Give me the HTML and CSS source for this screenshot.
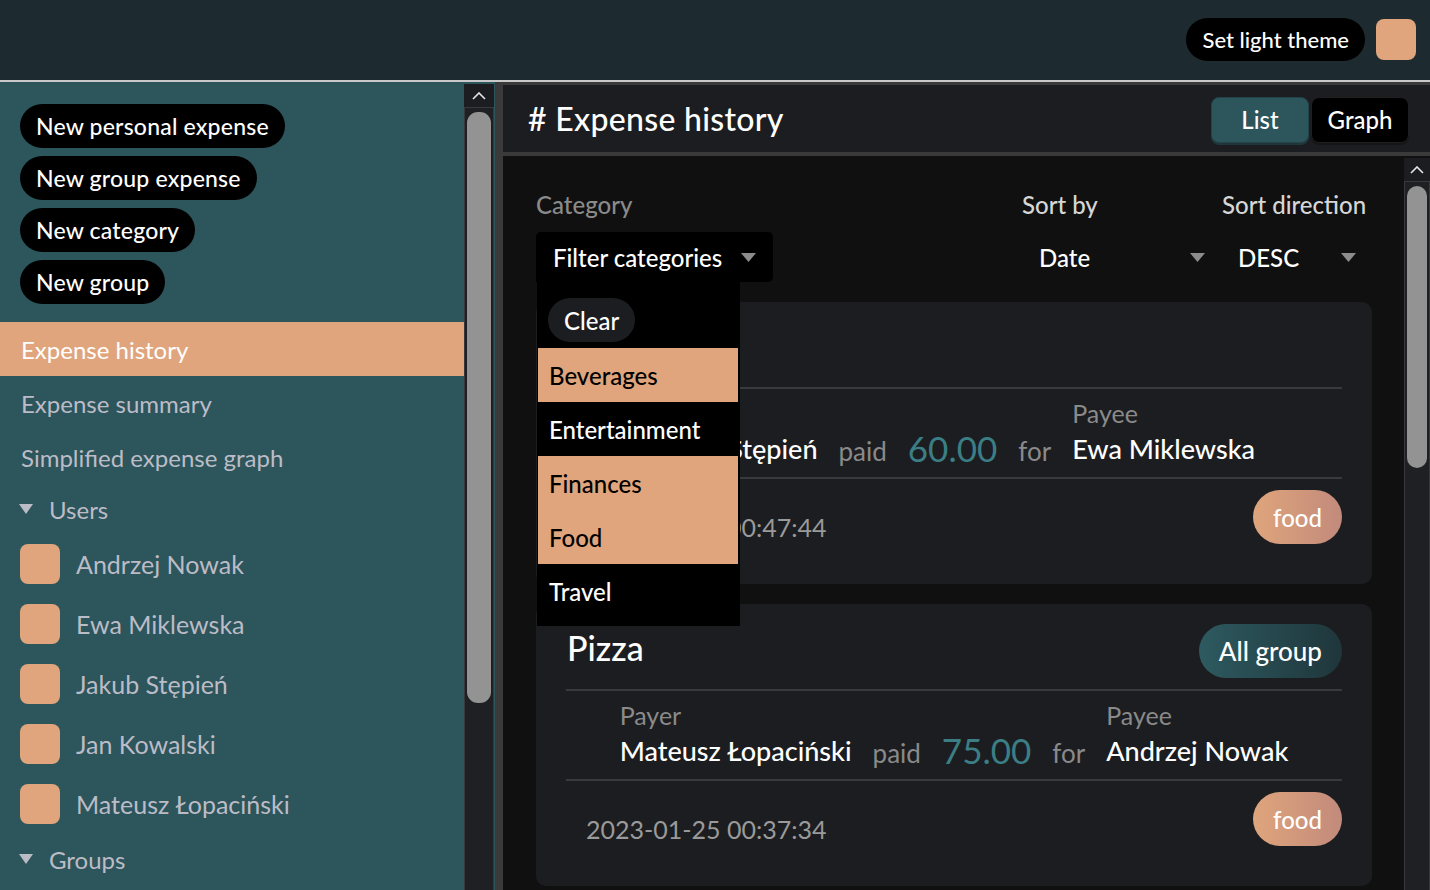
FILE: index.html
```html
<!DOCTYPE html>
<html lang="en">
<head>
<meta charset="utf-8">
<title>Expense history</title>
<link rel="stylesheet" href="styles.css">
</head>
<body>
<header class="topbar">
  <button class="theme-btn">Set light theme</button>
  <span class="swatch"></span>
</header>
<div class="app">
  <div class="side-wrap">
    <aside class="sidebar">
      <div class="actions">
        <button class="pill-btn">New personal expense</button>
        <button class="pill-btn">New group expense</button>
        <button class="pill-btn">New category</button>
        <button class="pill-btn">New group</button>
      </div>
      <nav class="nav">
        <a class="nav-item active">Expense history</a>
        <a class="nav-item">Expense summary</a>
        <a class="nav-item">Simplified expense graph</a>
        <div class="section"><svg class="tri" viewBox="0 0 14 10"><polygon points="0,0 14,0 7,10"/></svg>Users</div>
        <ul class="users">
          <li class="user"><span class="avatar"></span>Andrzej Nowak</li>
          <li class="user"><span class="avatar"></span>Ewa Miklewska</li>
          <li class="user"><span class="avatar"></span>Jakub Stępień</li>
          <li class="user"><span class="avatar"></span>Jan Kowalski</li>
          <li class="user"><span class="avatar"></span>Mateusz Łopaciński</li>
        </ul>
        <div class="section"><svg class="tri" viewBox="0 0 14 10"><polygon points="0,0 14,0 7,10"/></svg>Groups</div>
      </nav>
    </aside>
    <div class="scrollbar side-scroll">
      <div class="sb-btn"><svg viewBox="0 0 14 8"><polyline points="1,7 7,1 13,7"/></svg></div>
      <div class="sb-track"><div class="sb-thumb side-thumb"></div></div>
      <div class="sb-btn"><svg viewBox="0 0 14 8"><polyline points="1,1 7,7 13,1"/></svg></div>
    </div>
  </div>
  <main class="main">
    <div class="main-inner">
      <div class="main-head">
        <h1 class="title"># Expense history</h1>
        <div class="toggle">
          <button class="tg tg-active">List</button>
          <button class="tg">Graph</button>
        </div>
      </div>
      <div class="main-body">
        <div class="content">
          <div class="filters">
            <div class="fcol">
              <div class="flabel dim">Category</div>
              <div class="select filter-select">
                <span>Filter categories</span>
                <svg class="chev" viewBox="0 0 15 9"><polygon points="0,0 15,0 7.5,9"/></svg>
                <div class="dropdown">
                  <button class="clear-btn">Clear</button>
                  <div class="opt sel">Beverages</div>
                  <div class="opt">Entertainment</div>
                  <div class="opt sel">Finances</div>
                  <div class="opt sel">Food</div>
                  <div class="opt">Travel</div>
                </div>
              </div>
            </div>
            <div class="fcol">
              <div class="flabel">Sort by</div>
              <div class="select plain-select">
                <span>Date</span>
                <svg class="chev" viewBox="0 0 15 9"><polygon points="0,0 15,0 7.5,9"/></svg>
              </div>
            </div>
            <div class="fcol">
              <div class="flabel">Sort direction</div>
              <div class="select plain-select dir-select">
                <span>DESC</span>
                <svg class="chev" viewBox="0 0 15 9"><polygon points="0,0 15,0 7.5,9"/></svg>
              </div>
            </div>
          </div>

          <div class="cards">
            <article class="card">
              <div class="card-head">
                <h2 class="card-title">Wine</h2>
              </div>
              <div class="sep"></div>
              <div class="tx">
                <div class="party"><span class="plabel">Payer</span><span class="pname">Jakub Stępień</span></div>
                <span class="word">paid</span>
                <span class="amount">60.00</span>
                <span class="word">for</span>
                <div class="party"><span class="plabel">Payee</span><span class="pname">Ewa Miklewska</span></div>
              </div>
              <div class="sep"></div>
              <div class="card-foot">
                <span class="date">2023-01-25 00:47:44</span>
                <span class="tag food">food</span>
              </div>
            </article>

            <article class="card">
              <div class="card-head">
                <h2 class="card-title">Pizza</h2>
                <span class="tag group">All group</span>
              </div>
              <div class="sep"></div>
              <div class="tx">
                <div class="party"><span class="plabel">Payer</span><span class="pname">Mateusz Łopaciński</span></div>
                <span class="word">paid</span>
                <span class="amount">75.00</span>
                <span class="word">for</span>
                <div class="party"><span class="plabel">Payee</span><span class="pname">Andrzej Nowak</span></div>
              </div>
              <div class="sep"></div>
              <div class="card-foot">
                <span class="date">2023-01-25 00:37:34</span>
                <span class="tag food">food</span>
              </div>
            </article>
          </div>
        </div>
        <div class="scrollbar main-scroll">
          <div class="sb-btn"><svg viewBox="0 0 14 8"><polyline points="1,7 7,1 13,7"/></svg></div>
          <div class="sb-track"><div class="sb-thumb main-thumb"></div></div>
          <div class="sb-btn"><svg viewBox="0 0 14 8"><polyline points="1,1 7,7 13,1"/></svg></div>
        </div>
      </div>
    </div>
  </main>
</div>
</body>
</html>
```
FILE: styles.css
```css
* { box-sizing: border-box; }
html, body { margin: 0; padding: 0; }
body {
  width: 1430px;
  height: 890px;
  overflow: hidden;
  background: #1d2a2f;
  font-family: "Lato", "Noto Sans", sans-serif;
  color: #fff;
}
button { font-family: inherit; border: none; cursor: pointer; }

/* top bar */
.topbar {
  height: 82px;
  border-bottom: 2px solid #c9c9c9;
  display: flex;
  justify-content: flex-end;
  align-items: center;
  gap: 11px;
  padding: 0 14px 2px 0;
}
.theme-btn {
  height: 43px;
  padding: 0 16px;
  border-radius: 22px;
  background: #000;
  color: #fff;
  font-size: 22px;
  font-weight: 500;
}
.swatch {
  width: 40px;
  height: 41px;
  border-radius: 8px;
  background: #e0a57c;
}

/* app */
.app {
  display: flex;
  height: 808px;
}
.side-wrap {
  width: 495px;
  flex: none;
  display: flex;
  background: #2d555c;
  padding-top: 2px;
  overflow: hidden;
}
.sidebar {
  width: 464px;
  flex: none;
  padding-top: 20px;
}
.actions {
  display: flex;
  flex-direction: column;
  align-items: flex-start;
  gap: 8px;
  padding-left: 20px;
}
.pill-btn {
  height: 44px;
  padding: 0 16px;
  border-radius: 22px;
  background: #000;
  color: #fff;
  font-size: 23px;
  letter-spacing: 0.2px;
  font-weight: 500;
}
.nav { margin-top: 18px; display: flex; flex-direction: column; }
.nav-item {
  height: 54px;
  display: flex;
  align-items: center;
  padding-left: 21px;
  font-size: 24px;
  color: #bcbcc6;
}
.nav-item.active { background: #e0a57c; color: #fff; }
.nav-item.wide { letter-spacing: 0.3px; }
.section {
  height: 50px;
  display: flex;
  align-items: center;
  padding-left: 19px;
  gap: 16px;
  font-size: 24px;
  color: #bcbcc6;
}
.tri { width: 14px; height: 10px; fill: #bcbcc6; }
.users { list-style: none; margin: 0; padding: 0; }
.user {
  height: 60px;
  display: flex;
  align-items: center;
  gap: 16px;
  padding-left: 20px;
  font-size: 25px;
  color: #bcbcc6;
}
.avatar {
  width: 40px;
  height: 40px;
  border-radius: 8px;
  background: #e0a57c;
  flex: none;
}

/* scrollbars */
.scrollbar {
  display: flex;
  flex-direction: column;
  background: #1c1d20;
  flex: none;
}
.side-scroll { width: 30px; margin-right: 1px; height: 830px; }
.main-scroll { width: 26px; height: 760px; margin-top: 2px; }
.sb-btn {
  height: 23px;
  flex: none;
  display: flex;
  align-items: center;
  justify-content: center;
}
.sb-btn svg { width: 14px; height: 8px; fill: none; stroke: #e6e6e6; stroke-width: 1.6; }
.sb-track {
  flex: 1;
  border: 1px solid #38393b;
  background: #1f2023;
  padding: 4px 2px;
}
.sb-thumb { background: #939393; border-radius: 11px; }
.side-thumb { height: 591px; }
.main-thumb { height: 282px; }

/* main */
.main {
  flex: 1;
  background: #3a3a3a;
  padding: 3px 0 0 8px;
  overflow: hidden;
}
.main-inner {
  height: 100%;
  display: flex;
  flex-direction: column;
  background: #1c1d20;
}
.main-head {
  height: 71px;
  flex: none;
  border-bottom: 4px solid #3a3a3a;
  display: flex;
  align-items: center;
  justify-content: space-between;
  padding: 0 21px 0 25px;
}
.title { margin: 0; font-size: 32px; font-weight: 500; letter-spacing: 0.3px; }
.toggle { display: flex; gap: 2px; margin-top: 2px; }
.tg {
  width: 98px;
  height: 46px;
  border-radius: 8px;
  background: #000;
  color: #fff;
  font-size: 24px;
  font-weight: 500;
  border: 1px solid #1f1f1f;
  box-shadow: 0 2px 0 #151515;
}
.tg-active { background: #2d555c; border-color: #23434a; box-shadow: 0 2px 0 #20363b; }

.main-body {
  flex: 1;
  display: flex;
  background: #101010;
  overflow: hidden;
}
.content {
  flex: 1;
  padding: 34px 32px 0 33px;
}
.filters {
  display: grid;
  grid-template-columns: 1fr 200px 150px;
}
.flabel {
  height: 30px;
  line-height: 30px;
  font-size: 24px;
  color: #d6d6d6;
  font-weight: 500;
}
.flabel.dim { color: #8a8a8a; }
.select {
  margin-top: 12px;
  height: 50px;
  display: flex;
  align-items: center;
  justify-content: space-between;
  font-size: 24px;
  font-weight: 500;
  color: #fff;
  position: relative;
}
.filter-select {
  width: 237px;
  background: #000;
  border-radius: 5px 5px 5px 0;
  padding: 0 17px;
}
.plain-select { padding: 0 17px; }
.dir-select { padding: 0 16px; }
.chev { width: 15px; height: 9px; fill: #8c8c8c; }

.dropdown {
  position: absolute;
  left: 1px;
  top: 50px;
  width: 203px;
  height: 344px;
  background: #000;
  z-index: 5;
  padding: 16px 2px 0 1px;
}
.clear-btn {
  margin-left: 10px;
  height: 44px;
  padding: 0 16px;
  border-radius: 22px;
  background: #1c1d20;
  color: #fff;
  font-size: 24px;
  font-weight: 500;
  margin-bottom: 6px;
  display: block;
}
.opt {
  height: 54px;
  display: flex;
  align-items: center;
  padding-left: 11px;
  font-size: 24px;
  font-weight: 500;
  color: #fff;
}
.opt.sel { background: #e0a57c; color: #000; }

/* cards */
.cards {
  margin-top: 20px;
  display: flex;
  flex-direction: column;
  gap: 20px;
}
.card {
  background: #1c1d20;
  border-radius: 10px;
  padding: 20px 30px 40px;
}
.card-head {
  height: 54px;
  display: flex;
  align-items: center;
  justify-content: space-between;
  margin-bottom: 11px;
}
.card-title { margin: -8px 0 0 1px; font-size: 34px; font-weight: 500; }
.sep { height: 2px; background: #393a3c; }
.tx {
  display: flex;
  justify-content: center;
  align-items: flex-end;
  gap: 21px;
  padding: 10px 0 6px;
}
.party { display: flex; flex-direction: column; }
.plabel { font-size: 25px; line-height: 28px; color: #8a8a8a; }
.pname { font-size: 27px; line-height: 44px; font-weight: 500; color: #fff; }
.word { font-size: 26px; line-height: 40px; color: #8a8a8a; }
.amount { font-size: 35px; line-height: 46px; color: #3b7e85; }
.card-foot {
  margin-top: 11px;
  display: flex;
  align-items: flex-end;
  justify-content: space-between;
}
.date {
  padding-left: 20px;
  font-size: 25px;
  line-height: 30px;
  color: #9a9a9a;
  margin-bottom: 2px;
}
.tag {
  height: 54px;
  display: inline-flex;
  align-items: center;
  padding: 0 20px;
  border-radius: 27px;
  font-size: 24px;
  font-weight: 500;
  color: #fff;
}
.tag.food { background: linear-gradient(90deg, #dfa57c, #c28a7b); }
.tag.group { background: linear-gradient(90deg, #2d5a60, #1f363b); font-size: 26px; }
```
